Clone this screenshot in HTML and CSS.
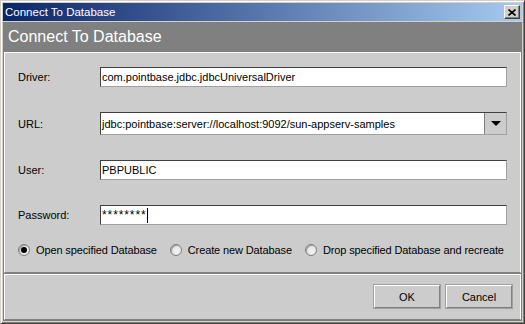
FILE: index.html
```html
<!DOCTYPE html>
<html lang="en">
<head>
    <meta charset="UTF-8">
    <title>Connect To Database</title>
    <link rel="stylesheet" href="styles.css">
</head>
<body>
    <div class="window">
        <div class="titlebar">
            <span class="title">Connect To Database</span>
            <button class="close" type="button">
                <svg width="8" height="7" viewBox="0 0 8 7"><path d="M0.5 0.5 L7.5 6.5 M7.5 0.5 L0.5 6.5" stroke="#000" stroke-width="1.6" fill="none"/></svg>
            </button>
        </div>
        <div class="frame">
            <div class="header">Connect To Database</div>
            <div class="content">
                <div class="form">
                    <label>Driver:</label>
                    <div class="field">com.pointbase.jdbc.jdbcUniversalDriver</div>

                    <label>URL:</label>
                    <div class="combo">
                        <div class="combo-text">jdbc:pointbase:server://localhost:9092/sun-appserv-samples</div>
                        <div class="combo-btn"><span class="arrow"></span></div>
                    </div>

                    <label>User:</label>
                    <div class="field">PBPUBLIC</div>

                    <label>Password:</label>
                    <div class="field"><span class="stars">********</span><span class="caret"></span></div>
                </div>
                <!-- database options -->
                <div class="radios">
                    <div class="radio checked"><span class="dot"></span>Open specified Database</div>
                    <div class="radio"><span class="dot"></span>Create new Database</div>
                    <div class="radio"><span class="dot"></span>Drop specified Database and recreate</div>
                </div>
            </div>
            <div class="actions">
                <button class="btn" type="button">OK</button>
                <button class="btn" type="button">Cancel</button>
            </div>
        </div>
    </div>
</body>
</html>
```

FILE: styles.css
```css
* {
    margin: 0;
    padding: 0;
    box-sizing: border-box;
    font-family: 'Liberation Sans', Arial, sans-serif;
}
body {
    background: #d4d0c8;
    width: 525px;
    height: 324px;
    overflow: hidden;
}
.window {
    width: 525px;
    height: 324px;
    display: flex;
    flex-direction: column;
    border: 1px solid;
    border-color: #d4d0c8 #404040 #404040 #d4d0c8;
    box-shadow: inset 1px 1px 0 #fff, inset -1px -1px 0 #808080;
    padding: 2px;
    background: #d4d0c8;
}
.titlebar {
    height: 18px;
    display: flex;
    align-items: center;
    justify-content: space-between;
    padding: 0 2px;
    background: linear-gradient(to right, #0a246a, #a6caf0);
    margin-bottom: 1px;
}
.title {
    color: white;
    font-size: 11.5px;
}
.close {
    width: 16px;
    height: 14px;
    display: flex;
    align-items: center;
    justify-content: center;
    background: #d4d0c8;
    border: 1px solid;
    border-color: #fff #404040 #404040 #fff;
    box-shadow: inset -1px -1px 0 #808080;
}
.frame {
    flex: 1;
    display: flex;
    flex-direction: column;
    background: #808080;
    padding: 0 1px 1px 1px;
}
.header {
    height: 30px;
    color: white;
    font-size: 16px;
    padding: 6px 0 0 4px;
}
.content {
    height: 221px;
    background: #cccccc;
    border-top: 1px solid #fff;
    border-left: 1px solid #fff;
    border-right: 1px solid #fff;
    border-bottom: 1px solid #808080;
    padding: 14px 13px 0 13px;
}
.form {
    display: grid;
    grid-template-columns: 82px 1fr;
    row-gap: 25px;
    align-items: center;
}
label {
    font-size: 11px;
    color: #000;
}
.field {
    height: 20px;
    background: #fff;
    border: 1px solid;
    border-color: #404040 #a0a0a0 #a0a0a0 #404040;
    font-size: 11px;
    padding-left: 1px;
    display: flex;
    align-items: center;
    white-space: nowrap;
}
.stars {
    font-size: 12px;
    letter-spacing: 0.9px;
}
.caret {
    display: inline-block;
    width: 1px;
    height: 15px;
    background: #000;
}
.combo {
    height: 23px;
    display: flex;
    border: 1px solid;
    border-color: #404040 #a0a0a0 #a0a0a0 #404040;
    background: #fff;
}
.combo-text {
    flex: 1;
    font-size: 11px;
    padding-left: 1px;
    display: flex;
    align-items: center;
    white-space: nowrap;
}
.combo-btn {
    width: 22px;
    background: #cccccc;
    border-left: 1px solid #808080;
    display: flex;
    align-items: center;
    justify-content: center;
}
.arrow {
    width: 0;
    height: 0;
    border-left: 5px solid transparent;
    border-right: 5px solid transparent;
    border-top: 5px solid #000;
}
.radios {
    display: flex;
    margin-top: 19px;
    gap: 13px;
}
.radio {
    display: flex;
    align-items: center;
    gap: 6px;
    font-size: 11px;
    letter-spacing: -0.12px;
    white-space: nowrap;
}
.dot {
    width: 12px;
    height: 12px;
    border-radius: 50%;
    border: 1px solid #808080;
    background: radial-gradient(circle at 60% 60%, #f4f4f4, #d8d8d8);
    box-shadow: inset 1px 1px 0 #a0a0a0;
    display: flex;
    align-items: center;
    justify-content: center;
}
.radio.checked .dot::after {
    content: "";
    width: 6px;
    height: 6px;
    border-radius: 50%;
    background: #000;
}
.actions {
    flex: 1;
    margin-top: 1px;
    background: #cccccc;
    border: 1px solid #fff;
    border-bottom-color: #808080;
    display: flex;
    justify-content: flex-end;
    align-items: flex-start;
    gap: 6px;
    padding: 10px 8px 0 0;
}
.btn {
    width: 66px;
    height: 23px;
    font-size: 11px;
    background: #cccccc;
    color: #000;
    border: 1px solid;
    border-color: #fff #808080 #808080 #fff;
    box-shadow: 0 0 0 1px #a0a0a0;
}
```
